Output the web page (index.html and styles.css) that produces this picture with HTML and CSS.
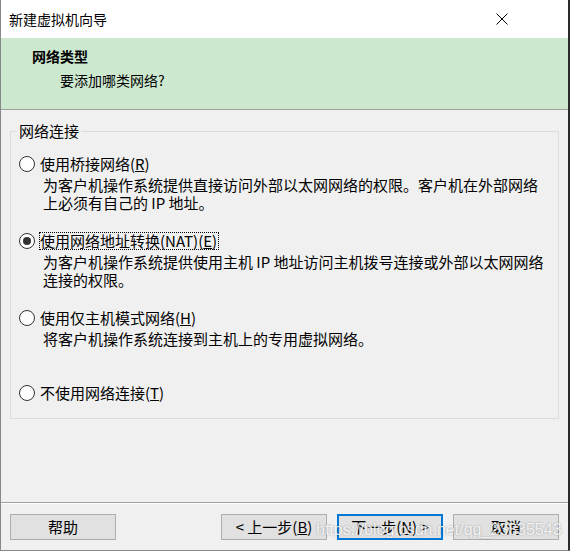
FILE: index.html
```html
<!DOCTYPE html>
<html lang="zh-CN">
<head>
<meta charset="utf-8">
<title>新建虚拟机向导</title>
<link rel="stylesheet" href="styles.css">
</head>
<body>
<div class="window">
  <div class="titlebar">
    <span class="title">新建虚拟机向导</span>
    <svg class="close" width="12" height="12" viewBox="0 0 12 12"><path d="M0.5 0.5 L11.5 11.5 M11.5 0.5 L0.5 11.5" stroke="#000" stroke-width="1" fill="none"/></svg>
  </div>
  <div class="header">
    <div class="h-title">网络类型</div>
    <div class="h-sub">要添加哪类网络?</div>
  </div>
  <div class="main">
    <fieldset class="group">
      <legend class="legend">网络连接</legend>
      <div class="options">
        <div class="option">
          <div class="row"><span class="radio"></span><span class="label">使用桥接网络(<u>R</u>)</span></div>
          <div class="desc">为客户机操作系统提供直接访问外部以太网网络的权限。客户机在外部网络<br>上必须有自己的 IP 地址。</div>
        </div>
        <div class="option">
          <div class="row"><span class="radio checked"></span><span class="label focus">使用网络地址转换(NAT)(<u>E</u>)</span></div>
          <div class="desc">为客户机操作系统提供使用主机 IP 地址访问主机拨号连接或外部以太网网络<br>连接的权限。</div>
        </div>
        <div class="option">
          <div class="row"><span class="radio"></span><span class="label">使用仅主机模式网络(<u>H</u>)</span></div>
          <div class="desc">将客户机操作系统连接到主机上的专用虚拟网络。</div>
        </div>
        <div class="option">
          <div class="row"><span class="radio"></span><span class="label">不使用网络连接(<u>T</u>)</span></div>
        </div>
      </div>
    </fieldset>
  </div>
  <div class="footer">
    <div class="btn">帮助</div>
    <div class="spacer"></div>
    <div class="btn">&lt; 上一步(<u>B</u>)</div>
    <div class="btn primary">下一步(<u>N</u>) &gt;</div>
    <div class="btn">取消</div>
  </div>
  <div class="watermark">https://blog.csdn.net/qq_23835543</div>
</div>
</body>
</html>
```
FILE: styles.css
```css
html, body {
  margin: 0;
  padding: 0;
  background: #f0f0f0;
}
body {
  font-family: "Noto Sans CJK SC", "Noto Sans", sans-serif;
  color: #000;
}
.window {
  position: relative;
  width: 570px;
  height: 551px;
  box-sizing: border-box;
  border-left: 1px solid #888;
  border-right: 2px solid #2b2b2b;
  border-bottom: 1px solid #888;
  background: #f0f0f0;
  display: flex;
  flex-direction: column;
}
.titlebar {
  height: 38px;
  flex: none;
  background: #fff;
  display: flex;
  align-items: center;
  justify-content: space-between;
  padding: 0 60px 0 8px;
  font-size: 14px;
  line-height: 18px;
}
.title {
  padding-bottom: 1px;
}
.close {
  display: block;
}
.header {
  height: 62px;
  flex: none;
  background: #cce8cf;
  border-bottom: 1px solid #a0a0a0;
  padding: 9px 0 0 31px;
  font-size: 14px;
  line-height: 18px;
}
.h-title {
  font-weight: bold;
}
.h-sub {
  margin-top: 6px;
  padding-left: 28px;
}
.main {
  flex: 1;
  padding: 0 9px;
}
.group {
  margin: 12px 0 0;
  padding: 0;
  border: 1px solid #dcdcdc;
  min-width: 0;
}
.legend {
  margin-left: 6px;
  padding: 0 2px;
  font-size: 15px;
  line-height: 18px;
}
.options {
  display: grid;
  grid-template-rows: 77px 77px 75px 20px;
  padding: 14px 0 15px 8px;
  font-size: 15px;
}
.row {
  display: flex;
  align-items: center;
  height: 20px;
}
.radio {
  width: 16px;
  height: 16px;
  box-sizing: border-box;
  border: 1px solid #333;
  border-radius: 50%;
  background: #fff;
  display: flex;
  align-items: center;
  justify-content: center;
  margin-right: 4px;
  flex: none;
}
.radio.checked::after {
  content: "";
  width: 8px;
  height: 8px;
  border-radius: 50%;
  background: #333;
}
.label {
  border: 1px dotted transparent;
  line-height: 16px;
  padding-right: 1px;
  white-space: nowrap;
}
.label.focus {
  border-color: #000;
}
.desc {
  margin-top: 2px;
  padding-left: 24px;
  line-height: 18px;
  white-space: nowrap;
}
.footer {
  height: 26px;
  flex: none;
  border-top: 1px solid #a0a0a0;
  box-shadow: inset 0 1px #fff;
  padding: 11px 9px 10px 9px;
  display: flex;
  gap: 10px;
}
.spacer {
  flex: 1;
  min-width: 0;
}
.btn {
  width: 106px;
  height: 26px;
  box-sizing: border-box;
  border: 1px solid #adadad;
  background: #e1e1e1;
  display: flex;
  align-items: center;
  justify-content: center;
  font-size: 15px;
  line-height: 18px;
  white-space: nowrap;
}
.btn.primary {
  border: 2px solid #0078d7;
}
.watermark {
  position: absolute;
  left: 315px;
  top: 522px;
  font-family: "Liberation Sans", Arial, sans-serif;
  font-size: 16px;
  line-height: 16px;
  color: rgba(255, 255, 255, 0.85);
  text-shadow: 0 0 2px rgba(0, 0, 0, 0.35);
  white-space: nowrap;
  pointer-events: none;
}
```
